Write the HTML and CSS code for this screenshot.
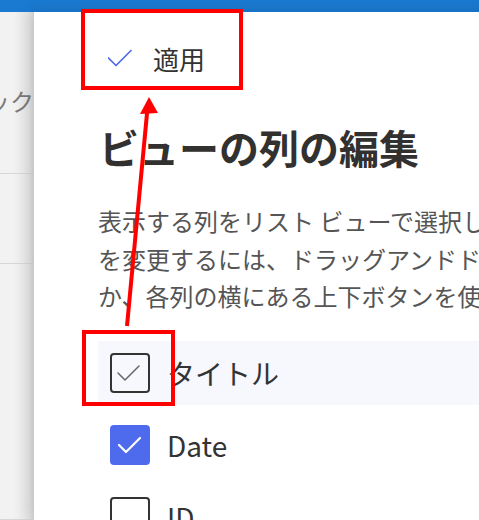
FILE: index.html
```html
<!DOCTYPE html>
<html lang="ja">
<head>
    <meta charset="UTF-8">
    <meta name="viewport" content="width=device-width, initial-scale=1.0">
    <title>ビューの列の編集</title>
    <link rel="stylesheet" href="styles.css">
</head>
<body>

    <!-- Obere Leiste -->
    <div class="top-bar"></div>

    <div class="layout">
        <!-- Seitenleiste (verdeckt) -->
        <aside class="sidebar">
            <div class="side-item side-first"><span class="side-text">ックス</span></div>
            <div class="side-item"></div>
            <div class="side-item side-last"></div>
        </aside>

        <!-- Bearbeitungs-Panel -->
        <main class="panel">
            <button class="apply-btn">
                <svg class="apply-icon" width="24" height="24" viewBox="0 0 24 24">
                    <polyline points="0.5,12 8,19.5 23,4.5" fill="none" stroke="#4f6bed" stroke-width="1.7" stroke-linecap="round" stroke-linejoin="round"/>
                </svg>
                <span>適用</span>
            </button>

            <h1>ビューの列の編集</h1>

            <p class="description">表示する列をリスト ビューで選択します。列の順序<br>を変更するには、ドラッグアンドドロップする<br>か、各列の横にある上下ボタンを使用します。</p>

            <ul class="column-list">
                <li class="column-row is-hovered">
                    <span class="checkbox">
                        <svg width="36" height="36" viewBox="0 0 36 36">
                            <polyline points="6,18 13,25 27,11" fill="none" stroke="#666" stroke-width="1.5" stroke-linecap="round" stroke-linejoin="round"/>
                        </svg>
                    </span>
                    <span class="column-name">タイトル</span>
                </li>
                <li class="column-row">
                    <span class="checkbox is-checked">
                        <svg width="36" height="36" viewBox="0 0 36 36">
                            <polyline points="7,18 14,25 28,11" fill="none" stroke="#fff" stroke-width="2.2" stroke-linecap="round" stroke-linejoin="round"/>
                        </svg>
                    </span>
                    <span class="column-name">Date</span>
                </li>
                <li class="column-row">
                    <span class="checkbox"></span>
                    <span class="column-name">ID</span>
                </li>
            </ul>
        </main>
    </div>

    <!-- Markierungen -->
    <svg class="annotations" width="479" height="520" viewBox="0 0 479 520">
        <rect x="83" y="11" width="158" height="77" fill="none" stroke="#ff0000" stroke-width="4"/>
        <rect x="84" y="332" width="89" height="72" fill="none" stroke="#ff0000" stroke-width="4"/>
        <line x1="127" y1="326" x2="147.5" y2="108" stroke="#ff0000" stroke-width="4"/>
        <polygon points="149,97 140,114 158,113" fill="#ff0000"/>
    </svg>

</body>
</html>
```

FILE: styles.css
```css
* {
    margin: 0;
    padding: 0;
    box-sizing: border-box;
}

body {
    font-family: "Noto Sans CJK JP", "Noto Sans", sans-serif;
    background-color: #ffffff;
    color: #333;
    width: 479px;
    height: 520px;
    overflow: hidden;
    position: relative;
}

.top-bar {
    height: 12px;
    background-color: #1a79d0;
}

.layout {
    display: flex;
    height: 508px;
}

/* Seitenleiste */
.sidebar {
    width: 34px;
    flex-shrink: 0;
    overflow: hidden;
    background: linear-gradient(to right, #f2f2f2 40%, #e4e4e4 85%, #d9d9d9);
}

.side-item {
    height: 90px;
    border-bottom: 1px solid #d6d6d6;
}

.side-first {
    height: 162px;
    padding-top: 74px;
}

.side-last {
    height: 256px;
}

.side-text {
    display: block;
    white-space: nowrap;
    margin-left: -14px;
    font-size: 24px;
    line-height: 30px;
    color: #7a7a7a;
}

/* Panel */
.panel {
    position: relative;
    z-index: 1;
    width: 660px;
    flex-shrink: 0;
    background-color: #ffffff;
    padding: 18px 0 0 64px;
    box-shadow: -4px 0 14px rgba(0, 0, 0, 0.12);
}

.apply-btn {
    display: flex;
    align-items: center;
    gap: 21px;
    height: 56px;
    padding: 0 10px;
    border: none;
    background: none;
    font-family: inherit;
    font-size: 26px;
    color: #333;
    cursor: pointer;
}

h1 {
    margin-top: 37px;
    font-size: 40px;
    line-height: 48px;
    font-weight: 700;
    color: #323130;
    padding-left: 1px;
}

.description {
    white-space: nowrap;
    margin-top: 31px;
    font-size: 24px;
    line-height: 37.5px;
    color: #555;
}

.column-list {
    list-style: none;
    margin-top: 26px;
    display: flex;
    flex-direction: column;
    gap: 8px;
}

.column-row {
    display: flex;
    align-items: center;
    gap: 17px;
    height: 64px;
    padding-left: 12px;
}

.column-row.is-hovered {
    background-color: #f6f8fd;
}

.checkbox {
    width: 40px;
    height: 40px;
    flex-shrink: 0;
    border: 2px solid #333;
    border-radius: 4px;
    display: flex;
    align-items: center;
    justify-content: center;
}

.checkbox.is-checked {
    background-color: #4f6bed;
    border-color: #4f6bed;
}

.column-name {
    font-size: 28px;
    color: #333;
}

/* Markierungen */
.annotations {
    position: absolute;
    top: 0;
    left: 0;
    pointer-events: none;
    z-index: 2;
}
```
